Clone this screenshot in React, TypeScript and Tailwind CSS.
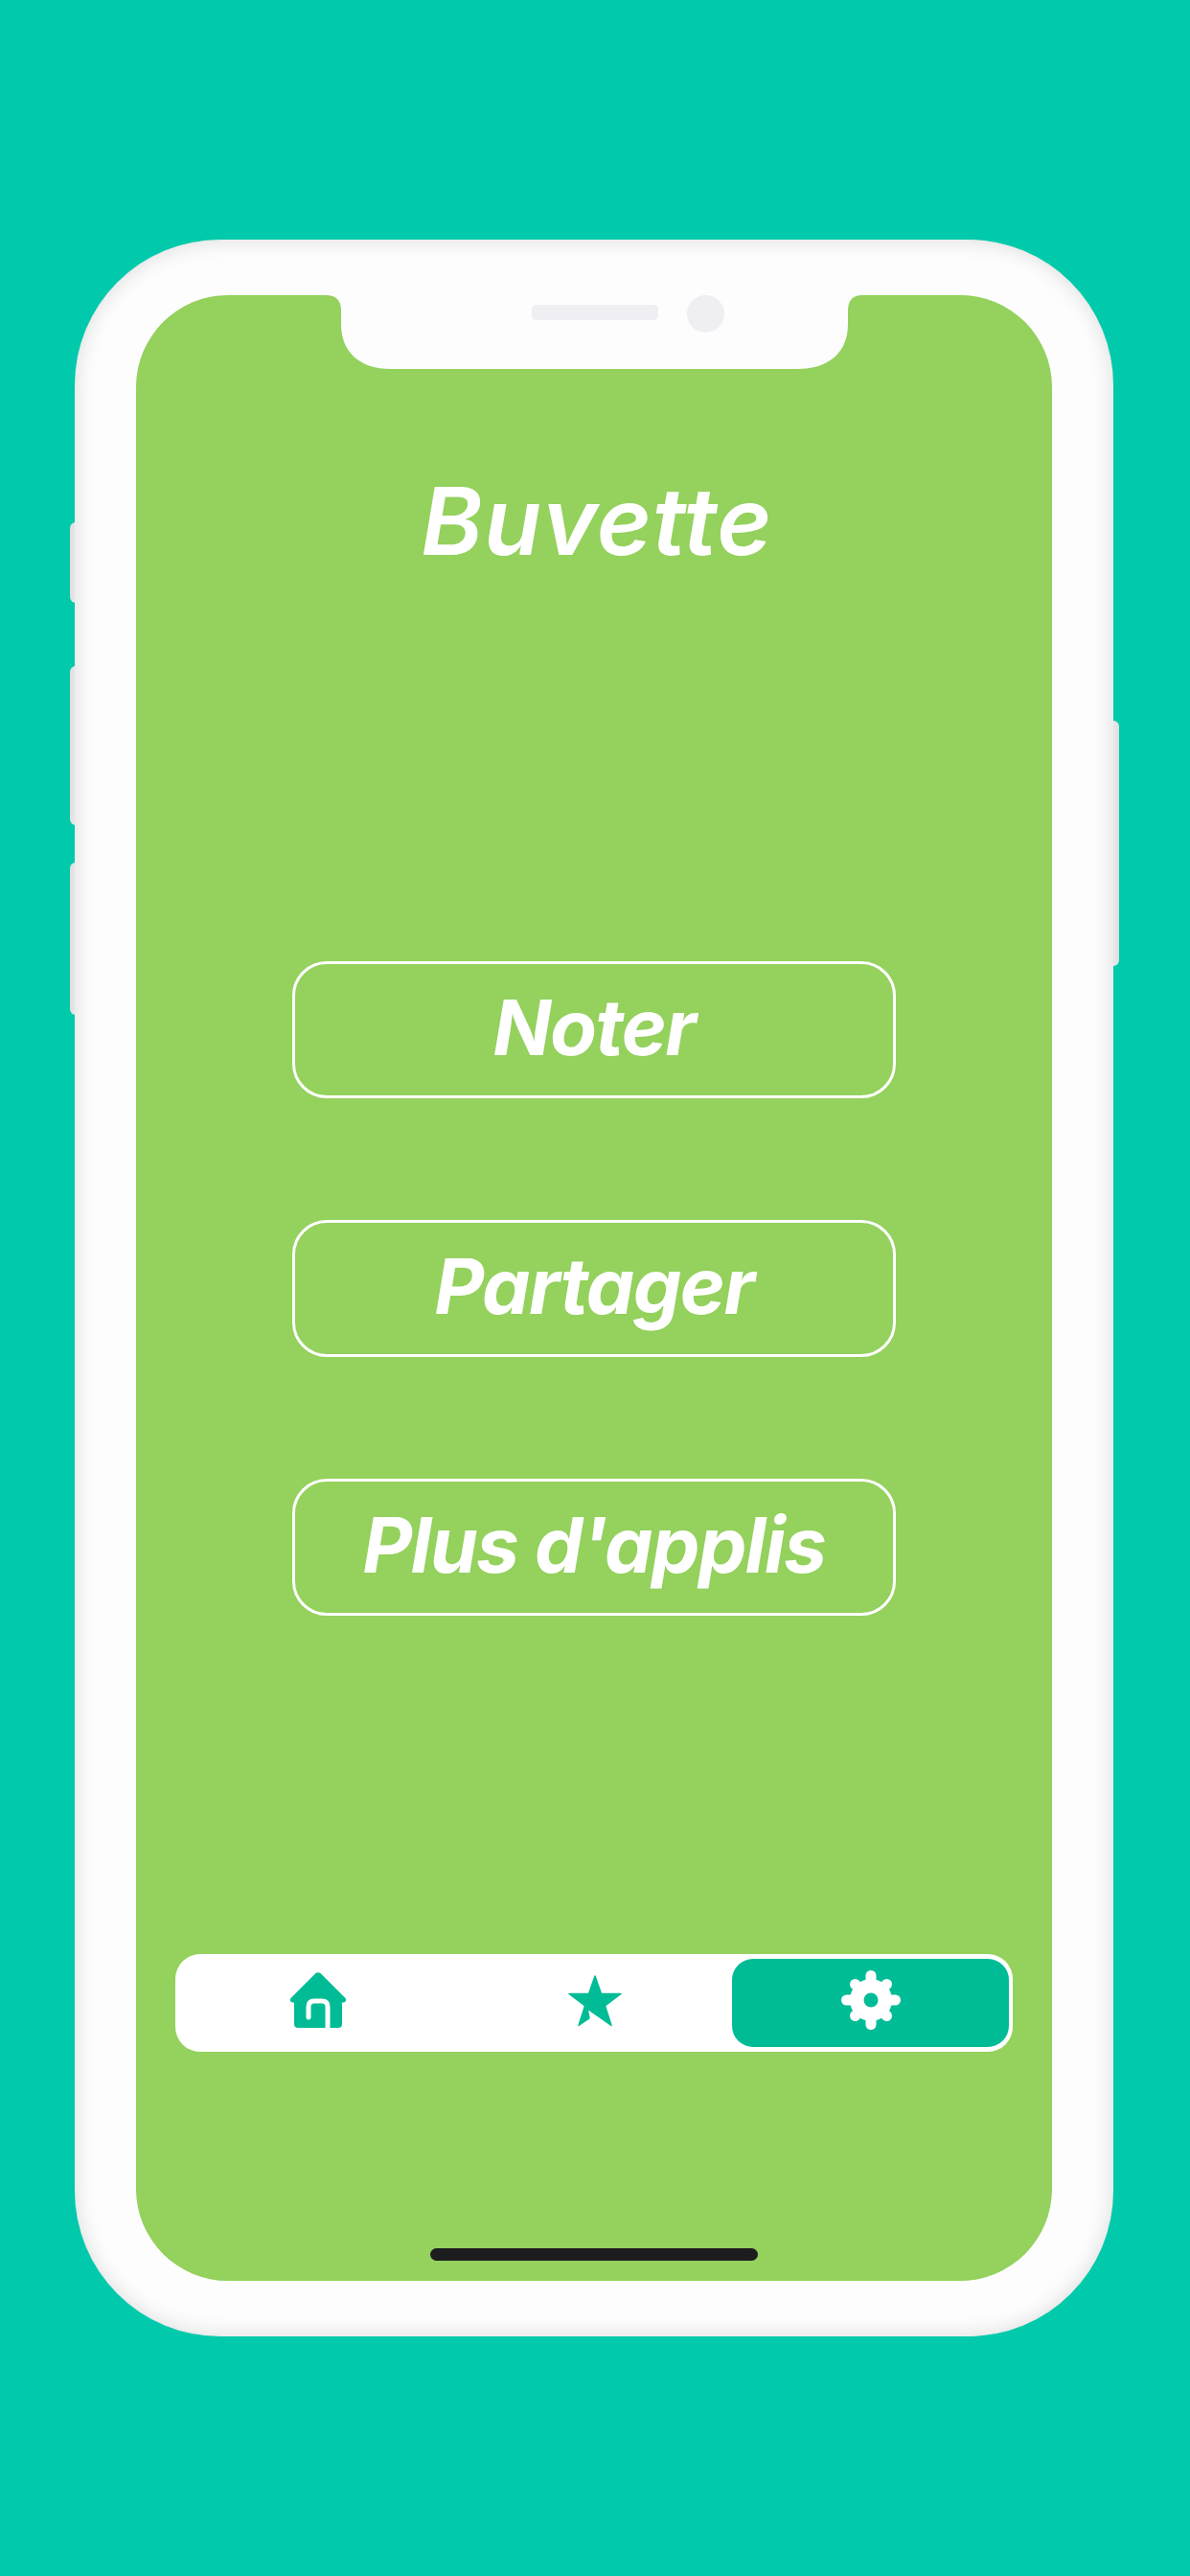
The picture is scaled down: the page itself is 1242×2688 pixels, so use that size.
import React from 'react';

const font = { fontFamily: '"Inter", "Open Sans", sans-serif' };

const HomeIcon = () => (
  <svg width="60" height="58" viewBox="0 0 60 58">
    <path
      d="M27.5 1 Q30 -0.5 32.5 1 L58.500 27 Q60.500 30 57 31.500 L55 31.500 L55 54 Q55 58 51 58 L9 58 Q5 58 5 54 L5 31.500 L3 31.500 Q-0.500 30 1.500 27 Z"
      fill="#00BC96"
    />
    <path
      d="M20 47 L20 36 Q20 30 26 30 L34 30 Q40 30 40 36 L40 58"
      fill="none"
      stroke="#fff"
      strokeWidth="5"
      strokeLinecap="round"
    />
  </svg>
);

const StarIcon = () => (
  <svg width="56" height="54" viewBox="0 0 56 54">
    <path
      d="M28 1 L34.500 19.500 L55 19.500 L38.500 32 L45 52.500 L20 35 L22 45 L11 52.500 L17.500 32 L1 19.500 L21.500 19.500 Z"
      fill="#00BC96"
      stroke="#00BC96"
      strokeWidth="1.5"
      strokeLinejoin="round"
    />
  </svg>
);

const GearIcon = () => (
  <svg width="62" height="62" viewBox="0 0 62 62">
    <circle cx="31" cy="31" r="22" fill="#fff" />
    <g stroke="#fff" strokeWidth="11" strokeLinecap="round">
      <line x1="31" y1="31" x2="31" y2="5.500" />
      <line x1="31" y1="31" x2="31" y2="56.500" />
      <line x1="31" y1="31" x2="5.500" y2="31" />
      <line x1="31" y1="31" x2="56.500" y2="31" />
      <line x1="31" y1="31" x2="14.500" y2="14.500" />
      <line x1="31" y1="31" x2="47.500" y2="14.500" />
      <line x1="31" y1="31" x2="14.500" y2="47.500" />
      <line x1="31" y1="31" x2="47.500" y2="47.500" />
    </g>
    <circle cx="31" cy="31" r="7.500" fill="#00BC96" />
  </svg>
);

const MenuButton = ({ label }: { label: string }) => (
  <button className="flex h-[143px] w-[630px] items-center justify-center rounded-[36px] border-[3px] border-white pb-[6px] text-[80px] font-bold italic leading-none tracking-[-1.5px] text-white">
    {label}
  </button>
);

export default function App() {
  return (
    <div className="h-[2688px] w-[1242px] overflow-hidden bg-[#00CAAB] pl-[78px] pt-[250px]" style={font}>
      <div className="relative h-[2188px] w-[1084px]">
        {/* side buttons */}
        <div className="absolute left-[-5px] top-[295px] h-[84px] w-[12px] rounded-l-[6px] bg-gradient-to-r from-[#dedede] to-[#f3f3f5]" />
        <div className="absolute left-[-5px] top-[445px] h-[166px] w-[12px] rounded-l-[6px] bg-gradient-to-r from-[#dedede] to-[#f3f3f5]" />
        <div className="absolute left-[-5px] top-[650px] h-[159px] w-[12px] rounded-l-[6px] bg-gradient-to-r from-[#dedede] to-[#f3f3f5]" />
        <div className="absolute right-[-6px] top-[502px] h-[256px] w-[12px] rounded-r-[6px] bg-gradient-to-l from-[#dedede] to-[#f3f3f5]" />

        <div className="relative h-full w-full rounded-[152px] bg-[#fdfdfe] px-[64px] pt-[58px] shadow-[inset_0_0_22px_rgba(0,0,0,0.14)]">
          <div className="relative flex h-[2072px] w-[956px] flex-col items-center rounded-[96px] bg-[#94D15D] pt-[184px]">
            {/* notch */}
            <svg className="absolute left-[198px] top-0" width="560" height="78" viewBox="0 0 560 78">
              <path
                d="M0 0 Q16 0 16 16 L16 30 C16 60 36 77 68 77 L492 77 C525 77 545 60 545 30 L545 16 Q545 0 560 0 Z"
                fill="#fdfdfe"
              />
            </svg>
            <div className="absolute left-[413px] top-[10px] h-[16px] w-[132px] rounded-[5px] bg-[#eeeef3]" />
            <div className="absolute left-[575px] top-0 h-[39px] w-[39px] rounded-full bg-[#eeeef3]" />

            <h1 className="pl-[6px] text-[98px] font-semibold italic leading-[104px] tracking-[1px] text-white">Buvette</h1>

            <div className="mt-[407px] flex flex-col items-center gap-[127px]">
              <MenuButton label="Noter" />
              <MenuButton label="Partager" />
              <MenuButton label="Plus d'applis" />
            </div>

            <div className="mt-[353px] flex h-[102px] w-[874px] items-center rounded-[26px] bg-white pr-[4px]">
              <div className="flex h-full w-[298px] items-center justify-center pb-[6px]">
                <HomeIcon />
              </div>
              <div className="flex h-full w-[283px] items-center justify-center pb-[4px] pr-[4px]">
                <StarIcon />
              </div>
              <div className="flex h-[92px] flex-1 items-center justify-center rounded-[22px] bg-[#00BC96]">
                <div className="pb-[6px]">
                  <GearIcon />
                </div>
              </div>
            </div>

            <div className="mt-[205px] h-[13px] w-[342px] rounded-full bg-[#1d1d1f]" />
          </div>
        </div>
      </div>
    </div>
  );
}
